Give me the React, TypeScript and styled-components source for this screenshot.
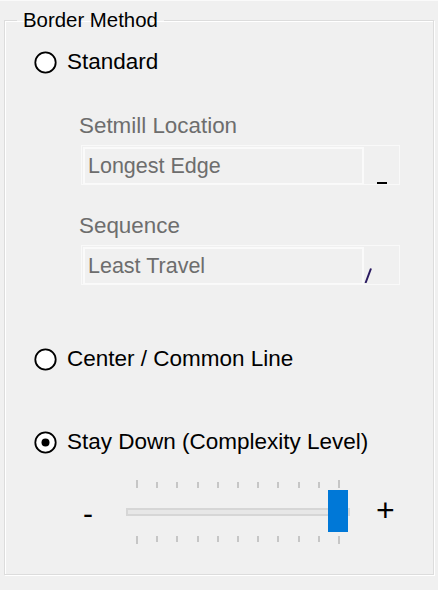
import React from "react";
import styled, { createGlobalStyle } from "styled-components";

const GlobalStyle = createGlobalStyle`
  html, body {
    margin: 0;
    padding: 0;
    background: #f0f0f0;
  }
  body {
    font-family: "Liberation Sans", Arial, sans-serif;
  }
`;

const Page = styled.div`
  width: 438px;
  height: 590px;
  box-sizing: border-box;
  border-top: 1px solid #fafafa;
  background: #f0f0f0;
  overflow: hidden;
`;

const Group = styled.fieldset`
  box-sizing: border-box;
  margin: 7px 0 0 4px;
  padding: 0;
  width: 430px;
  height: 567px;
  border: 1px solid #dcdcdc;
  box-shadow: inset 1px 1px 0 #ffffff, 1px 1px 0 #ffffff;
  min-inline-size: 0;
`;

const Legend = styled.legend`
  margin-left: 12px;
  padding: 0 6px;
  font-size: 20.4px;
  line-height: 24px;
  color: #000;
`;

const Body = styled.div`
  display: flex;
  flex-direction: column;
`;

const RadioRow = styled.label<{ $top: number }>`
  display: flex;
  align-items: center;
  gap: 10px;
  height: 26px;
  margin: ${(p) => p.$top}px 0 0 29px;
  font-size: 22.5px;
  line-height: 26px;
  color: #000;
  white-space: nowrap;
`;

const Options = styled.div`
  display: flex;
  flex-direction: column;
  margin-left: 74px;
`;

const FieldLabel = styled.div<{ $top: number }>`
  margin-top: ${(p) => p.$top}px;
  height: 26px;
  font-size: 22.4px;
  line-height: 26px;
  color: #6d6d6d;
  white-space: nowrap;
`;

const Combo = styled.div`
  box-sizing: border-box;
  display: flex;
  width: 319px;
  height: 40px;
  margin: 6px 0 0 2px;
  border: 1px solid #f9f9f9;
`;

const Field = styled.div`
  box-sizing: border-box;
  display: flex;
  align-items: center;
  width: 281px;
  margin: 1px 0 0 1px;
  padding-left: 3px;
  border: 2px solid #fafafa;
  border-bottom-width: 1px;
  font-size: 21.5px;
  line-height: 26px;
  color: #6d6d6d;
  white-space: nowrap;
`;

const DropButton = styled.div<{ $align: "center" | "flex-start" }>`
  flex: 1;
  display: flex;
  align-items: flex-end;
  justify-content: ${(p) => p.$align};
`;

const Slider = styled.div`
  display: flex;
  align-items: center;
  margin: 25px 0 0 78px;
`;

const SignLabel = styled.span<{ $size: number; $width: number; $shift: number }>`
  display: block;
  width: ${(p) => p.$width}px;
  font-size: ${(p) => p.$size}px;
  line-height: 1;
  color: #000;
  transform: translateY(${(p) => p.$shift}px);
`;

const SliderBody = styled.div`
  position: relative;
  display: flex;
  flex-direction: column;
  width: 224px;
  margin: 0 26px 0 0;
`;

const TickRow = styled.div<{ $end: "flex-start" | "flex-end" }>`
  display: flex;
  justify-content: space-between;
  align-items: ${(p) => p.$end};
  height: 8px;
  padding: 0 10px;
`;

const Tick = styled.span<{ $long: boolean }>`
  display: block;
  width: 2px;
  height: ${(p) => (p.$long ? 8 : 6)}px;
  background: #c6c6c6;
`;

const Track = styled.div`
  box-sizing: border-box;
  height: 8px;
  margin: 20px 0;
  border: 2px solid #d6d6d6;
  background: #e7e7e7;
`;

const Thumb = styled.div`
  position: absolute;
  left: 202px;
  top: 10px;
  width: 20px;
  height: 42px;
  background: #0078d7;
`;

const RadioIcon = ({ checked }: { checked?: boolean }) => (
  <svg width="23" height="23" viewBox="0 0 23 23">
    <circle cx="11.5" cy="11.5" r="10.2" fill="#fff" stroke="#000" strokeWidth="1.8" />
    {checked && <circle cx="11.5" cy="11.5" r="4" fill="#000" />}
  </svg>
);

const DashGlyph = () => (
  <svg width="10" height="2" viewBox="0 0 10 2">
    <rect x="0" y="0" width="10" height="2" fill="#000" />
  </svg>
);

const SlashGlyph = () => (
  <svg width="8" height="15" viewBox="0 0 8 15" style={{ marginBottom: 1 }}>
    <line x1="1.5" y1="15" x2="7" y2="0.5" stroke="#2a1a60" strokeWidth="2" />
  </svg>
);

const ticks = Array.from({ length: 11 }, (_, i) => i);

export default function App() {
  return (
    <>
      <GlobalStyle />
      <Page>
        <Group>
          <Legend>Border Method</Legend>
          <Body>
            <RadioRow $top={17}>
              <RadioIcon />
              Standard
            </RadioRow>
            <Options>
              <FieldLabel $top={38}>Setmill Location</FieldLabel>
              <Combo>
                <Field>Longest Edge</Field>
                <DropButton $align="center">
                  <DashGlyph />
                </DropButton>
              </Combo>
              <FieldLabel $top={28}>Sequence</FieldLabel>
              <Combo>
                <Field>Least Travel</Field>
                <DropButton $align="flex-start">
                  <SlashGlyph />
                </DropButton>
              </Combo>
            </Options>
            <RadioRow $top={61}>
              <RadioIcon />
              Center / Common Line
            </RadioRow>
            <RadioRow $top={57}>
              <RadioIcon checked />
              Stay Down (Complexity Level)
            </RadioRow>
            <Slider>
              <SignLabel $size={30} $width={43} $shift={2}>-</SignLabel>
              <SliderBody>
                <TickRow $end="flex-end">
                  {ticks.map((i) => (
                    <Tick key={i} $long={i === 0 || i === 10} />
                  ))}
                </TickRow>
                <Track />
                <TickRow $end="flex-start">
                  {ticks.map((i) => (
                    <Tick key={i} $long={i === 0 || i === 10} />
                  ))}
                </TickRow>
                <Thumb />
              </SliderBody>
              <SignLabel $size={32} $width={20} $shift={-2}>+</SignLabel>
            </Slider>
          </Body>
        </Group>
      </Page>
    </>
  );
}
